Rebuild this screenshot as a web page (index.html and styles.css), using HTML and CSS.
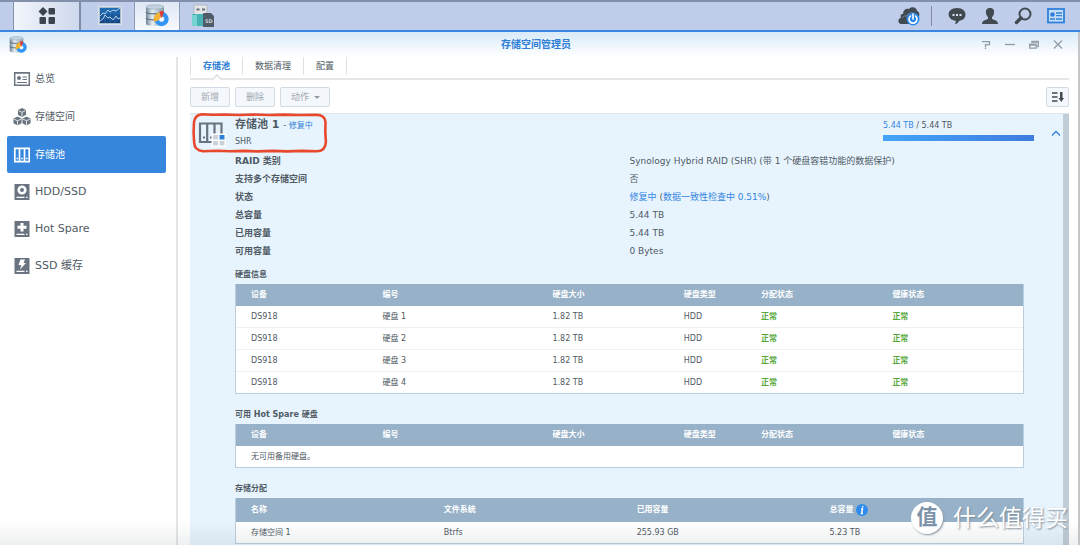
FILE: index.html
```html
<!DOCTYPE html>
<html lang="zh-CN">
<head>
<meta charset="utf-8">
<title>存储空间管理员</title>
<link rel="stylesheet" href="styles.css">
</head>
<body>
<svg class="defs" aria-hidden="true">
  <defs>
    <linearGradient id="metal" x1="0" x2="1"><stop offset="0" stop-color="#6f8495"/><stop offset=".35" stop-color="#e6edf2"/><stop offset="1" stop-color="#8298a8"/></linearGradient>
    <linearGradient id="screen" x1="0" y1="0" x2="0" y2="1"><stop offset="0" stop-color="#1d6cb4"/><stop offset="1" stop-color="#16427f"/></linearGradient>
    <symbol id="storage" viewBox="0 0 24 24">
      <path d="M1 3v17c0 2.500 18 2.500 18 0V3z" fill="url(#metal)"/>
      <ellipse cx="10" cy="3" rx="9" ry="2.200" fill="#c3d4e0" stroke="#8ca1b0" stroke-width=".6"/>
      <path d="M1 8c0 2.500 18 2.500 18 0M1 14c0 2.500 18 2.500 18 0" fill="none" stroke="#566a7a" stroke-width="1.200"/>
      <circle cx="16.500" cy="15" r="5" fill="#dceaf5" stroke="#3196f4" stroke-width="4.400"/>
      <path d="M16.500 15L9 18A8 8 0 0 1 14.500 8z" fill="#f5b334"/>
      <path d="M16.500 15L14.500 7.500A7.800 7.800 0 0 1 19 7.400z" fill="#e8372c"/>
      <circle cx="16.500" cy="15.500" r="2" fill="#fff"/>
    </symbol>
    <symbol id="cube" viewBox="0 0 10 10">
      <path d="M5 0l4.500 2.200v5.400L5 10 .5 7.600V2.200z" fill="#6a7480"/>
      <path d="M1 2.800l4 2 4-2M5 4.800V9.500" fill="none" stroke="#fff" stroke-width=".9"/>
    </symbol>
  </defs>
</svg>

<div class="desktop">
  <header class="taskbar">
    <button class="task main-menu" aria-label="主菜单">
      <svg width="18" height="18" viewBox="0 0 18 18" fill="#3c444d"><path d="M5 0l4.500 4.500L5 9 .5 4.500z"/><rect x="10.500" y="1" width="6.500" height="6.500" rx="1"/><rect x="1.500" y="10" width="6.500" height="7" rx="1"/><rect x="10.500" y="10" width="6.500" height="7" rx="1"/></svg>
    </button>
    <button class="task" aria-label="资源监控">
      <svg width="24" height="20" viewBox="0 0 24 20"><rect x=".5" y=".5" width="23" height="18" fill="#a9bccb" stroke="#d8e3ec"/><rect x="2" y="2" width="20" height="15" fill="url(#screen)"/><path d="M2 7h20M2 12h20M7 2v15M12 2v15M17 2v15" stroke="#3278b8" stroke-width=".6"/><path d="M2 10l3-3 2 1 3-4 2 2 3-2 3 1 4-3M2 15l3-2 2-4 3 3 2-1 3 3 3-4 2 3 2-1" fill="none" stroke="#d6ebff" stroke-width=".8"/></svg>
    </button>
    <button class="task active" aria-label="存储空间管理员"><svg width="24" height="24"><use href="#storage"/></svg></button>
    <button class="task" aria-label="外接设备">
      <svg width="24" height="24" viewBox="0 0 24 24"><rect x="3" y="1" width="13" height="11" fill="#e4e5e6" stroke="#aab0b5" stroke-width=".7"/><path d="M5.500 4.500h3v2h-3zM11 4.500h3v2h-3z" fill="#68717a"/><path d="M1 11q0-1 1-1h14q1 0 1 1v11H1z" fill="#48b4b6"/><path d="M1 11h5v11H1z" fill="#76d3cf"/><path d="M12 10q0-1 1-1h7l3 3v11H12z" fill="#505b69"/><text x="14" y="19" class="sd">SD</text></svg>
    </button>
    <div class="tray">
      <button class="tray-item cloud" aria-label="电源状态">
        <svg width="24" height="20" viewBox="0 0 24 20"><path d="M4 18c-4-1-3-6 0-6-1-3 0-4 2-4 0-4 3-6 6-5 2-3 8-2 8 2 3 1 3 5 1 7l-4 6z" fill="#414951"/><path d="M5 12c2-3 5-2 5-2 1-3 4-4 7-2" fill="none" stroke="#8f9cb0" stroke-width=".7"/><circle cx="16" cy="13" r="6.500" fill="#2c88ea"/><path d="M13.500 10a4 4 0 1 0 5 0M16 8v5" fill="none" stroke="#fff" stroke-width="1.600" stroke-linecap="round"/></svg>
      </button>
      <span class="tray-line"></span>
      <button class="tray-item" aria-label="通知">
        <svg width="18" height="18" viewBox="0 0 18 18"><path d="M9 1c11 0 11 12 2 13-1 2-2 3-4 3l1-3C-2 13-2 1 9 1z" fill="#414951"/><path d="M4.500 7h2v2h-2zM8 7h2v2H8zM11.500 7h2v2h-2z" fill="#dce5f3"/></svg>
      </button>
      <button class="tray-item" aria-label="用户">
        <svg width="18" height="18" viewBox="0 0 18 18" fill="#414951"><path d="M9 1c3 0 4.500 2 4 5-.3 2-1 3.500-2 4v2c2 1 6 1 6 5H1c0-4 4-4 6-5v-2C6 9.500 5.300 8 5 6 4.500 3 6 1 9 1z"/></svg>
      </button>
      <button class="tray-item" aria-label="搜索">
        <svg width="18" height="18" viewBox="0 0 18 18" fill="none" stroke="#414951"><circle cx="11" cy="7" r="5.500" stroke-width="2"/><path d="M7 11L2.500 15.500" stroke-width="3.400" stroke-linecap="round"/></svg>
      </button>
      <button class="tray-item" aria-label="小工具">
        <svg width="18" height="18" viewBox="0 0 18 18"><rect x="1" y="2" width="16" height="13.500" fill="#c7ddf7" stroke="#2d80dc" stroke-width="1.800"/><circle cx="5.500" cy="7.500" r="2.300" fill="#2d80dc"/><path d="M9 6h6M9 8.700h6M3 12h5M9 12h6" stroke="#2d80dc" stroke-width="1.300"/></svg>
      </button>
    </div>
  </header>

  <main class="window">
    <div class="titlebar">
      <svg class="app-icon" width="18" height="18"><use href="#storage"/></svg>
      <h1>存储空间管理员</h1>
      <div class="controls">
        <button aria-label="帮助"><svg width="10" height="10" viewBox="0 0 10 10"><path d="M1 1.700h7.500v3H4.500V7M4.500 7.500v1.500"/></svg></button>
        <button aria-label="最小化"><svg width="10" height="10" viewBox="0 0 10 10"><path d="M0 4.500h10"/></svg></button>
        <button aria-label="还原"><svg width="10" height="10" viewBox="0 0 10 10"><path d="M3 3V1.500h6.300v5H8M.7 4.200h6.500v4H.7zM.7 5h6.500M3 2h6"/></svg></button>
        <button aria-label="关闭"><svg width="10" height="10" viewBox="0 0 10 10"><path d="M1 .500l8 8M9 .500L1 8.500"/></svg></button>
      </div>
    </div>

    <div class="body">
      <nav class="sidebar">
        <a href="#"><svg width="18" height="18" viewBox="0 0 18 18"><path d="M1.700 2.700h14.600v12.600H1.700zM1 3h16" fill="none" stroke="#6a7480" stroke-width="1.500"/><circle cx="6" cy="8" r="2" fill="#6a7480"/><path d="M9.500 7H14M9.500 9.500H14M4 12.500h10" stroke="#6a7480" stroke-width="1.200"/></svg>总览</a>
        <a href="#"><svg width="18" height="18" viewBox="0 0 18 18"><use href="#cube" x="4.500" y="0" width="9" height="9"/><use href="#cube" x="0" y="8.500" width="9" height="9"/><use href="#cube" x="9" y="8.500" width="9" height="9"/></svg>存储空间</a>
        <a href="#" class="current" aria-current="page"><svg width="18" height="18" viewBox="0 0 18 18"><path d="M1.800 2.300h14.400v13.400H1.800zM6.500 2v14M11.500 2v14" fill="none" stroke="#fff" stroke-width="1.700"/><path d="M3.500 12.500h1.500M8.200 12.500h1.600M13 12.500h1.500" stroke="#fff" stroke-width="1.300"/></svg>存储池</a>
        <a href="#" class="latin"><svg width="18" height="18" viewBox="0 0 18 18"><path d="M1.500 1h15v16h-15z" fill="#6a7480"/><circle cx="9" cy="7" r="3.300" fill="none" stroke="#fff" stroke-width="2.600"/><path d="M3.500 14.300h8M13 14.300h1.500" stroke="#fff" stroke-width="1.300"/></svg>HDD/SSD</a>
        <a href="#" class="latin"><svg width="18" height="18" viewBox="0 0 18 18"><path d="M1.500 1h15v16h-15z" fill="#6a7480"/><path d="M9 3v8.500M4.500 7.200h9" stroke="#fff" stroke-width="3"/><path d="M3.500 14.300h8M13 14.300h1.500" stroke="#fff" stroke-width="1.300"/></svg>Hot Spare</a>
        <a href="#" class="latin"><svg width="18" height="18" viewBox="0 0 18 18"><path d="M1.500 1h15v16h-15z" fill="#6a7480"/><path d="M7.500 2.500H12L10.500 6H13l-6 6.500 1.300-4.500H5.500z" fill="#fff"/><path d="M3.500 14.300h8M13 14.300h1.500" stroke="#fff" stroke-width="1.300"/></svg>SSD 缓存</a>
      </nav>

      <section class="content">
        <div class="tabs" role="tablist">
          <button role="tab" aria-selected="true" class="tab selected">存储池</button>
          <button role="tab" class="tab">数据清理</button>
          <button role="tab" class="tab">配置</button>
        </div>
        <div class="toolbar">
          <button class="btn" disabled>新增</button>
          <button class="btn" disabled>删除</button>
          <button class="btn" disabled>动作 <span class="caret"></span></button>
          <button class="sort" aria-label="排序"><svg width="12" height="12" viewBox="0 0 12 12"><path d="M0 2h5.500M0 6h5.500M0 10h5.500" stroke="#414951" stroke-width="1.500"/><path d="M8 1h2.500v6H12l-2.700 4L6.500 7H8z" fill="#414951"/></svg></button>
        </div>

        <div class="scroll-area">
          <article class="pool">
            <header class="pool-head">
              <svg class="pool-icon" width="28" height="26" viewBox="0 0 28 26"><path d="M2 2.500h21.500v18.500H2zM9.200 1.500V21M16.500 1.500V21" fill="none" stroke="#69737f" stroke-width="2.200"/><path d="M5 16.500h2M12 16.500h2" stroke="#69737f" stroke-width="2"/><path d="M13.500 12.500H28V26H13.500z" fill="#fff"/><path d="M15 14h5v4.500h-5zM15 20h5v4.500h-5zM21.500 20h5v4.500h-5z" fill="#cbd2d9"/><path d="M21.500 14h5v4.500h-5z" fill="#2d80dc"/></svg>
              <div class="pool-name">
                <h2>存储池 1 <span class="status">- <b>修复中</b></span></h2>
                <p>SHR</p>
              </div>
              <div class="usage">
                <p><span class="blue">5.44 TB</span> / 5.44 TB</p>
                <div class="bar"></div>
              </div>
              <button class="collapse" aria-label="收起"><svg width="12" height="8" viewBox="0 0 12 8"><path d="M2 6.500l4-4 4 4" fill="none" stroke="#3180da" stroke-width="1.300"/></svg></button>
              <svg class="marker" width="138" height="42" viewBox="0 0 138 42" aria-hidden="true"><path d="M11 2.300l10 .5 12-.3 15 .5 14-.5 16 .5 15-.4 15 .4 17-.2Q134 3 134.500 10l-.2 10 .6 10Q134.500 39 126 39.300l-15-.4-15 .5-14-.5-15 .5-14-.5-14 .4-13-.5-14 .5Q3.500 38 3.200 31L2.600 21 3 10Q4 3 11 2.300z"/></svg>
            </header>

            <dl class="details">
              <dt>RAID 类别</dt><dd>Synology Hybrid RAID (SHR) (带 1 个硬盘容错功能的数据保护)</dd>
              <dt>支持多个存储空间</dt><dd>否</dd>
              <dt>状态</dt><dd><span class="blue">修复中</span> (<span class="blue">数据一致性检查中 0.51%</span>)</dd>
              <dt>总容量</dt><dd>5.44 TB</dd>
              <dt>已用容量</dt><dd>5.44 TB</dd>
              <dt>可用容量</dt><dd>0 Bytes</dd>
            </dl>

            <h3>硬盘信息</h3>
            <table class="disks">
              <colgroup><col class="c1"><col class="c2"><col class="c1"><col class="c3"><col class="c1"><col></colgroup>
              <thead><tr><th>设备</th><th>编号</th><th>硬盘大小</th><th>硬盘类型</th><th>分配状态</th><th>健康状态</th></tr></thead>
              <tbody>
                <tr><td>DS918</td><td>硬盘 1</td><td>1.82 TB</td><td>HDD</td><td class="ok">正常</td><td class="ok">正常</td></tr>
                <tr><td>DS918</td><td>硬盘 2</td><td>1.82 TB</td><td>HDD</td><td class="ok">正常</td><td class="ok">正常</td></tr>
                <tr><td>DS918</td><td>硬盘 3</td><td>1.82 TB</td><td>HDD</td><td class="ok">正常</td><td class="ok">正常</td></tr>
                <tr><td>DS918</td><td>硬盘 4</td><td>1.82 TB</td><td>HDD</td><td class="ok">正常</td><td class="ok">正常</td></tr>
              </tbody>
            </table>

            <h3>可用 Hot Spare 硬盘</h3>
            <table class="disks">
              <colgroup><col class="c1"><col class="c2"><col class="c1"><col class="c3"><col class="c1"><col></colgroup>
              <thead><tr><th>设备</th><th>编号</th><th>硬盘大小</th><th>硬盘类型</th><th>分配状态</th><th>健康状态</th></tr></thead>
              <tbody><tr><td colspan="6">无可用备用硬盘。</td></tr></tbody>
            </table>

            <h3>存储分配</h3>
            <table class="volumes">
              <colgroup><col class="v1"><col class="v1"><col class="v1"><col></colgroup>
              <thead><tr><th>名称</th><th>文件系统</th><th>已用容量</th><th><span class="with-info">总容量 <svg width="12" height="12" viewBox="0 0 12 12"><circle cx="6" cy="6" r="6" fill="#2f8ced"/><path d="M6.700 2v1.500M5 5h1.500L5.500 9.500H7" fill="none" stroke="#fff" stroke-width="1.400"/></svg></span></th></tr></thead>
              <tbody><tr><td>存储空间 1</td><td>Btrfs</td><td>255.93 GB</td><td>5.23 TB</td></tr></tbody>
            </table>
          </article>
          <div class="scrollbar"></div>
        </div>
      </section>
    </div>
    <div class="shade"></div>
  </main>
  <div class="watermark"><span class="seal">值</span><span>什么值得买</span></div>
</div>
</body>
</html>
```

FILE: styles.css
```css
* { box-sizing: border-box; }
body, h1, h2, h3, p, dl, dd { margin: 0; }
body {
  font: 9px/18px "DejaVu Sans", "Noto Sans CJK SC", sans-serif;
  color: #505a64;
}
button {
  font: inherit;
  color: inherit;
  border: 0;
  padding: 0;
  background: none;
}
svg { display: block; flex: none; }
.defs { position: absolute; width: 0; height: 0; }
.blue { color: #3485e0; }

.desktop {
  position: relative;
  display: flex;
  flex-direction: column;
  min-height: 100vh;
  background: #c3c5c8;
}

/* Taskbar */
.taskbar {
  display: flex;
  height: 32px;
  padding-left: 13px;
  border-top: 2px solid #8290ac;
  border-bottom: 2px solid #3b87df;
  background: #bfcdea;
}
.task {
  display: flex;
  align-items: center;
  justify-content: center;
  width: 46px;
}
.task.main-menu {
  width: 68px;
  margin-right: 6px;
  border-left: 1px solid #8392ad;
  border-right: 2px solid #7f8ca6;
  background: linear-gradient(90deg, #f2f5fb, #ced9ed);
}
.task.active {
  margin-left: 1px;
  border-left: 1px solid #8c9bb8;
  border-right: 1px solid #8c9bb8;
  background: linear-gradient(#dfe7f5, #f7f9fd);
}
.sd { font: bold 5px "DejaVu Sans", sans-serif; fill: #c9d1d8; }
.tray {
  display: flex;
  align-items: center;
  gap: 15px;
  margin-left: auto;
  padding-right: 15px;
}
.tray-line { width: 1px; height: 20px; margin-right: 1px; background: #7f8ba3; }
.tray-item.cloud { margin-right: -5px; }

/* Window */
.window {
  position: relative;
  display: flex;
  flex-direction: column;
  flex: 1;
  margin-right: 2px;
  background: #fff;
}
.titlebar {
  display: grid;
  grid-template-columns: 1fr auto 1fr;
  align-items: center;
  height: 25px;
  padding: 0 15px 0 9px;
  background: linear-gradient(#d9eaf9, #fff);
}
.titlebar h1 { font-size: 10px; color: #2f7fd6; }
.controls { display: flex; justify-content: flex-end; gap: 14px; }
.controls path { fill: none; stroke: #939ca6; stroke-width: 1.3; }
.body { display: flex; flex: 1; }

.sidebar {
  flex: none;
  width: 178px;
  padding: 3px 10px 0 7px;
  border-right: 2px solid #e3e6e9;
}
.sidebar a {
  display: flex;
  align-items: center;
  gap: 4px;
  height: 38px;
  padding-left: 6px;
  border-radius: 2px;
  font-size: 10px;
  color: #505a64;
  text-decoration: none;
}
.sidebar a.latin { font-size: 11px; }
.sidebar a.current { background: #3586dc; color: #fff; }
.sidebar a.current, .sidebar a.latin { height: 37px; }
.sidebar a.latin:last-child { height: 38px; }

.content {
  display: flex;
  flex-direction: column;
  flex: 1;
  padding: 0 9px 0 12px;
}
.tabs { display: flex; height: 23px; border-bottom: 2px solid #e4e6e8; }
.tab {
  position: relative;
  height: 18px;
  padding: 0 12px;
  border-right: 1px solid #dde1e6;
}
.tab.selected { border-left: 1px solid #dde1e6; color: #2f7fd6; font-weight: bold; }
.tab.selected::after {
  content: "";
  position: absolute;
  left: 22px;
  top: 19px;
  width: 7px;
  height: 7px;
  border: solid #d3d8dc;
  border-width: 1px 0 0 1px;
  background: #fff;
  transform: rotate(45deg);
}
.toolbar { display: flex; gap: 5px; padding: 7px 0 6px; }
.btn {
  height: 20px;
  padding: 0 10px;
  border: 1px solid #d2dae4;
  border-radius: 2px;
  background: #f4f7fb;
  color: #a0a8b1;
}
.caret {
  display: inline-block;
  margin-left: 2px;
  border: 3px solid transparent;
  border-top-color: #929ba6;
  border-bottom: 0;
  vertical-align: middle;
}
.btn:has(.caret) { padding-right: 9px; }
.sort {
  display: grid;
  place-items: center;
  width: 23px;
  height: 20px;
  margin-left: auto;
  border: 1px solid #d2dae4;
  border-radius: 2px;
  background: #f4f7fb;
}

/* Storage pool */
.scroll-area { display: flex; flex: 1; border-top: 1px solid #dce6ee; }
.scrollbar { width: 6px; background: #c0ccd6; }
.pool { flex: 1; padding: 0 39px 1px 45px; background: #e7f4fe; }
.pool-head { position: relative; display: flex; height: 38px; }
.pool-icon { margin: 7px 9px 0 -37px; }
.pool-name { flex: 1; padding-top: 3px; line-height: 16px; }
.pool-name h2 { font-size: 11px; line-height: 16px; }
.status { font-size: 8px; font-weight: normal; }
.status b { color: #2f7fd6; font-weight: normal; }
.pool-name p, .usage { font-size: 8px; }
.usage { width: 151px; margin-right: -10px; padding-top: 3px; }
.bar { height: 6px; background: linear-gradient(90deg, #43a5fa, #3f7cde); }
.collapse { position: absolute; right: -38px; top: 15px; }
.marker { position: absolute; left: -44px; top: -2px; }
.marker path {
  fill: none;
  stroke: #e8482c;
  stroke-width: 2.6;
  stroke-linejoin: round;
}
.details { display: grid; grid-template-columns: 1fr 1fr; }
.details dt { font-weight: bold; }

h3 { margin: 7px 0 0; font-size: 8px; line-height: 18px; }
.details + h3 { margin-top: 6px; }
.pool table + h3 { margin-top: 12px; }
table {
  width: 100%;
  table-layout: fixed;
  border: 1px solid #b9cfe0;
  border-top: 0;
  border-spacing: 0;
  background: #fff;
  font-size: 8px;
  line-height: 16px;
}
th, td { height: 22px; padding: 0 0 0 15px; text-align: left; }
th { background: #96b1c8; color: #fff; }
td { border-bottom: 1px solid #eef1f4; }
tbody tr:last-child td { height: 21px; border-bottom: 0; }
.volumes th { height: 24px; }
.c1 { width: 16.7%; }
.c2 { width: 21.6%; }
.c3 { width: 9.8%; }
.v1 { width: 24.5%; }
.ok { color: #56a83a; font-weight: bold; }
.with-info { display: flex; align-items: center; gap: 3px; }

.shade {
  position: absolute;
  inset: auto 0 0;
  height: 24px;
  background: linear-gradient(transparent, rgba(70, 80, 90, .09));
  pointer-events: none;
}
.watermark {
  position: absolute;
  right: 12px;
  bottom: 11px;
  display: flex;
  align-items: center;
  gap: 10px;
  color: #fff;
  font-size: 23px;
  line-height: 32px;
  text-shadow: 1px 1px 2px #7d8a96;
}
.seal {
  width: 32px;
  height: 32px;
  border-radius: 50%;
  background: #fff;
  box-shadow: 1px 1px 2px #8a96a1;
  color: #7c92a8;
  font-size: 21px;
  font-weight: bold;
  line-height: 30px;
  text-align: center;
  text-shadow: none;
}
```
